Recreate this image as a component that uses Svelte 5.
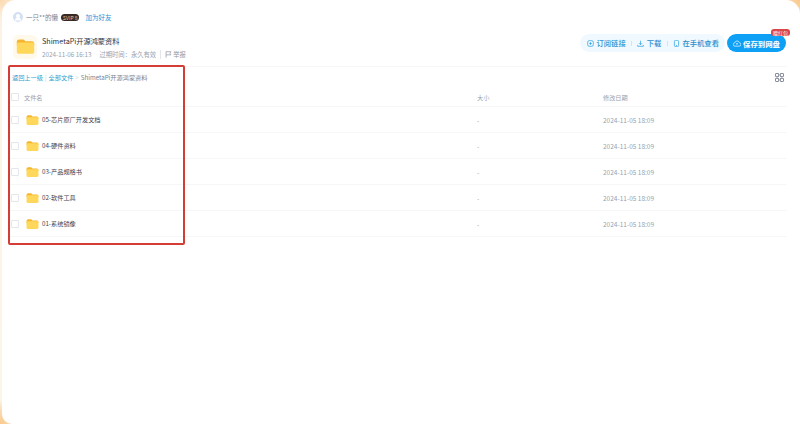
<script>
  const files = ['05-芯片原厂开发文档', '04-硬件资料', '03-产品规格书', '02-软件工具', '01-系统镜像'];
</script>

{#snippet folder(cls)}
  <svg class={cls} viewBox="0 0 24 20">
    <path d="M1 4a3 3 0 0 1 3-3h5.500l2.500 2.500h8a3 3 0 0 1 3 3V8H1z" fill="#f5b52e" />
    <path d="M1 7a2 2 0 0 1 2-2h18a2 2 0 0 1 2 2v10a2 2 0 0 1-2 2H3a2 2 0 0 1-2-2z" fill="#ffd75a" />
  </svg>
{/snippet}

<div class="page">
  <div class="card">
    <div class="user">
      <svg class="avatar" viewBox="0 0 10 10">
        <circle cx="5" cy="5" r="5" fill="#d5e0f5" />
        <circle cx="5" cy="4" r="2" fill="#fff" />
        <path d="M2 8.600a3 3 0 0 1 6 0z" fill="#fff" />
      </svg>
      <span class="uname">一只**的懒</span>
      <span class="badge">SVIP 8</span>
      <span class="add">加为好友</span>
    </div>

    <div class="head">
      <div class="head-left">
        <div class="folder-bg">{@render folder('big')}</div>
        <div>
          <div class="title">ShimetaPi开源鸿蒙资料</div>
          <div class="meta">
            <span>2024-11-06 16:13</span>
            <span>过期时间：永久有效</span>
            <span class="report">
              <svg viewBox="0 0 10 10"><path d="M1.500 9.500V1h7L7 3.200 8.500 5.500h-7" fill="none" stroke="#8f95a3" /></svg>
              举报
            </span>
          </div>
        </div>
      </div>
      <div class="actions">
        <div class="pill">
          <span class="act">
            <svg viewBox="0 0 10 10"><rect x="1" y="1" width="8" height="8" rx="2" fill="none" stroke="#2a9fe0" /><path d="M5 3v4M3 5h4" stroke="#2a9fe0" /></svg>
            订阅链接
          </span>
          <i></i>
          <span class="act">
            <svg viewBox="0 0 10 10"><path d="M5 1v5.500M2.800 4.500 5 6.700l2.200-2.200M1 7v2h8V7" fill="none" stroke="#2a9fe0" /></svg>
            下载
          </span>
          <i></i>
          <span class="act">
            <svg viewBox="0 0 10 10"><rect x="2" y="0.500" width="6" height="9" rx="1.500" fill="none" stroke="#2a9fe0" /><path d="M4 7.800h2" stroke="#2a9fe0" /></svg>
            在手机查看
          </span>
        </div>
        <div class="save">
          <svg viewBox="0 0 12 10"><path d="M3 9a2.500 2.500 0 0 1-.3-5A3.500 3.500 0 0 1 9.500 3.800 2.600 2.600 0 0 1 9 9z" fill="none" stroke="#fff" /><path d="M6 7.500V4.500M4.700 5.700 6 4.500l1.300 1.200" fill="none" stroke="#fff" stroke-width=".8" /></svg>
          保存到网盘
          <span class="tag">赠红包</span>
        </div>
      </div>
    </div>

    <div class="crumbs">
      <div class="trail">
        <span class="link">返回上一级</span>
        <span class="sep">|</span>
        <span class="link">全部文件</span>
        <span class="sep">&gt;</span>
        <span>ShimetaPi开源鸿蒙资料</span>
      </div>
      <svg class="grid-icon" viewBox="0 0 10 10">
        <rect x="0.500" y="0.500" width="3.600" height="3.600" rx="1" />
        <rect x="5.900" y="0.500" width="3.600" height="3.600" rx="1" />
        <rect x="0.500" y="5.900" width="3.600" height="3.600" rx="1" />
        <rect x="5.900" y="5.900" width="3.600" height="3.600" rx="1" />
      </svg>
    </div>

    <div class="row th">
      <span class="check"></span>
      <span class="name">文件名</span>
      <span class="size">大小</span>
      <span class="date">修改日期</span>
    </div>
    {#each files as file}
      <div class="row">
        <span class="check"></span>
        <span class="name">{@render folder('small')}<span class="fname">{file}</span></span>
        <span class="size">-</span>
        <span class="date">2024-11-05 18:09</span>
      </div>
    {/each}

    <div class="mark"></div>
  </div>
</div>

<style>
  :global(body) {
    margin: 0;
    background: #fff;
  }

  .page {
    height: 424px;
    box-sizing: border-box;
    padding: 0 0 0 2px;
    overflow: hidden;
    background:
      radial-gradient(circle at 100% 0, #f9c98d 0, #fbdcb4 16px, transparent 28px),
      radial-gradient(circle at 0 100%, #f9c98d 0, #fbdcb4 14px, transparent 24px),
      radial-gradient(circle at 0 0, #fbd9ae 0, #fdeedd 16px, transparent 30px),
      linear-gradient(#fdf3e4, #fbf6e6);
    font-family: "Noto Sans CJK SC", "Liberation Sans", sans-serif;
  }

  .card {
    position: relative;
    height: 424px;
    box-sizing: border-box;
    padding: 0 13px 0 8px;
    background: #fff;
    border-radius: 14px 14px 0 10px;
    overflow: hidden;
  }

  .user {
    display: flex;
    align-items: center;
    height: 14px;
    margin: 10px 0 0 3px;
    font-size: 6.500px;
    color: #7b8190;
  }

  .avatar {
    width: 10px;
    height: 10px;
    margin-right: 3px;
  }

  .badge {
    margin-left: 3px;
    padding: 0 2px;
    height: 7px;
    line-height: 7px;
    border-radius: 4px;
    background: #3a2a25;
    color: #eac9a5;
    font-size: 5px;
    white-space: nowrap;
  }

  .add {
    margin-left: 6px;
    color: #2f8fd8;
  }

  .head {
    display: flex;
    justify-content: space-between;
    align-items: center;
    height: 29px;
    margin-top: 8px;
    padding-left: 3px;
  }

  .head-left {
    display: flex;
    align-items: center;
  }

  .folder-bg {
    display: flex;
    align-items: center;
    justify-content: center;
    width: 24px;
    height: 24px;
    margin-right: 5px;
    border-radius: 5px;
    background: #fff9ec;
  }

  .big {
    width: 19px;
    height: 17px;
  }

  .title {
    font-size: 7.200px;
    line-height: 13px;
    color: #2b2f3a;
  }

  .meta {
    display: flex;
    gap: 8px;
    margin-top: 2px;
    font-size: 6.300px;
    line-height: 9px;
    color: #9a9fac;
  }

  .report {
    display: flex;
    align-items: center;
    gap: 1px;
    margin-left: -4px;
    padding-left: 4px;
    border-left: 1px solid #e3e5ea;
    color: #8f95a3;
  }

  .report svg {
    width: 7px;
    height: 7px;
  }

  .actions {
    display: flex;
    align-items: center;
    gap: 2px;
    margin: -7px 1px 0 0;
  }

  .pill {
    display: flex;
    align-items: center;
    justify-content: space-between;
    height: 18px;
    width: 145px;
    box-sizing: border-box;
    padding: 0 6px 0 7px;
    border-radius: 9px;
    background: #f0f9ff;
  }

  .pill i {
    width: 1px;
    height: 5px;
    background: #d8e4ec;
  }

  .act {
    display: flex;
    flex: none;
    align-items: center;
    gap: 2.500px;
    font-size: 7.300px;
    font-weight: 500;
    color: #2a8fd0;
    white-space: nowrap;
  }

  .act svg {
    width: 7px;
    height: 7px;
  }

  .save {
    position: relative;
    display: flex;
    align-items: center;
    justify-content: center;
    gap: 2px;
    width: 59px;
    height: 18px;
    border-radius: 9px;
    background: #0ea0f5;
    color: #fff;
    font-size: 7.400px;
    font-weight: 700;
    white-space: nowrap;
  }

  .save svg {
    width: 8px;
    height: 7px;
  }

  .tag {
    position: absolute;
    top: -5px;
    right: -4px;
    height: 7px;
    padding: 0 2px;
    line-height: 7px;
    border-radius: 3px;
    background: #d9474b;
    font-size: 5px;
    font-weight: 400;
  }

  .crumbs {
    display: flex;
    justify-content: space-between;
    align-items: center;
    height: 21px;
    margin-top: 5px;
    padding: 0 3px 0 2px;
    border-top: 1px solid #f6f7f9;
    font-size: 6.200px;
    color: #7b8190;
  }

  .trail {
    display: flex;
    gap: 2px;
  }

  .link {
    color: #2f9fd0;
  }

  .sep {
    color: #c8ccd4;
  }

  .grid-icon {
    width: 9px;
    height: 9px;
    fill: none;
    stroke: #566074;
    stroke-width: 1;
  }

  .row {
    display: flex;
    align-items: center;
    height: 26px;
    border-bottom: 1px solid #f6f7f9;
    box-sizing: border-box;
    font-size: 6.500px;
    color: #9a9fac;
  }

  .th {
    height: 19px;
    font-size: 6.200px;
  }

  .check {
    width: 6px;
    height: 6px;
    margin-left: 1px;
    border: 1px solid #e4e6eb;
    border-radius: 1px;
  }

  .name {
    display: flex;
    align-items: center;
    width: 453px;
    margin-left: 5px;
  }

  .small {
    width: 13px;
    height: 12px;
    margin: 0 3px 0 2px;
  }

  .fname {
    font-size: 6.200px;
    color: #3d4250;
  }

  .size {
    width: 126px;
  }

  .mark {
    position: absolute;
    left: 6px;
    top: 65px;
    width: 173px;
    height: 176px;
    border: 2px solid #d43c36;
    border-radius: 2px;
  }
</style>
